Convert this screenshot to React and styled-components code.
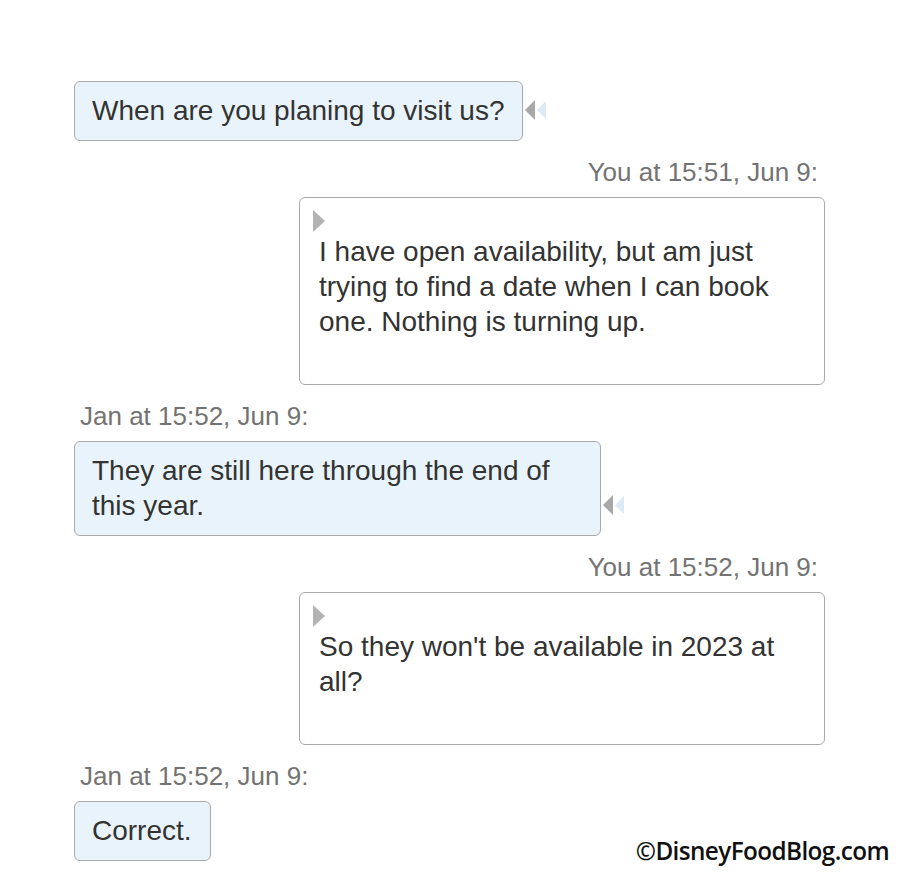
import React from 'react';
import styled, { createGlobalStyle } from 'styled-components';

const GlobalStyle = createGlobalStyle`
    html, body {
        margin: 0;
        padding: 0;
        background: #ffffff;
    }
    body {
        font-family: "Liberation Sans", Arial, sans-serif;
    }
`

const Page = styled.div`
    position: relative;
    width: 900px;
    height: 878px;
    box-sizing: border-box;
    padding: 81px 75px 0 74px;
    overflow: hidden;
`

const Thread = styled.div`
    display: flex;
    flex-direction: column;
    width: 751px;
`

const Stamp = styled.div`
    margin-top: 16px;
    margin-bottom: 10px;
    height: 30px;
    line-height: 30px;
    font-size: 26px;
    color: #737373;
    text-align: ${props => (props.$mine ? 'right' : 'left')};
    padding: ${props => (props.$mine ? '0 7px 0 0' : '0 0 0 6px')};
`

const Row = styled.div`
    display: flex;
    justify-content: ${props => (props.$mine ? 'flex-end' : 'flex-start')};
    align-items: flex-end;
`

const Bubble = styled.div`
    box-sizing: border-box;
    border: 1.5px solid #a9a9a9;
    border-radius: 6px;
    font-size: 28px;
    line-height: 35px;
    color: #333333;
    background: ${props => (props.$mine ? '#ffffff' : '#e9f3fb')};
    width: ${props => (props.$width ? props.$width + 'px' : 'auto')};
    padding: ${props => (props.$mine ? '12px 18px 45.5px 19px' : '11px 18px 11.5px 17px')};
`

const Marker = styled.svg`
    display: block;
    width: 12px;
    height: 22px;
    margin: 0 0 2px -6px;
`

const Tail = styled.svg`
    display: block;
    width: 24px;
    height: 24px;
    margin: 0 0 19px 1px;
    flex-shrink: 0;
`

const Watermark = styled.div`
    position: absolute;
    right: 11px;
    bottom: 11px;
    font-family: "Open Sans", "Noto Sans", sans-serif;
    font-weight: 600;
    font-size: 24.3px;
    letter-spacing: -0.6px;
    color: #111111;
`

const TailIcon = () => (
    <Tail viewBox="0 0 24 24">
        <polygon points="1,12 11,2 11,22" fill="#a8a8a8" />
        <polygon points="13,12 22,3 22,21" fill="#dceaf6" />
    </Tail>
)

const SentMarker = () => (
    <Marker viewBox="0 0 12 22">
        <polygon points="0,0 12,11 0,22" fill="#b3b3b3" />
    </Marker>
)

const messages = [
    { mine: false, text: 'When are you planing to visit us?' },
    { mine: true, stamp: 'You at 15:51, Jun 9:', text: 'I have open availability, but am just trying to find a date when I can book one. Nothing is turning up.' },
    { mine: false, stamp: 'Jan at 15:52, Jun 9:', text: 'They are still here through the end of this year.', width: 527 },
    { mine: true, stamp: 'You at 15:52, Jun 9:', text: "So they won't be available in 2023 at all?" },
    { mine: false, stamp: 'Jan at 15:52, Jun 9:', text: 'Correct.', notail: true },
]

const App = () => {
    return (
        <>
            <GlobalStyle />
            <Page>
                <Thread>
                    {messages.map((m, i) => (
                        <React.Fragment key={i}>
                            {m.stamp && <Stamp $mine={m.mine}>{m.stamp}</Stamp>}
                            <Row $mine={m.mine}>
                                <Bubble $mine={m.mine} $width={m.mine ? 526 : m.width}>
                                    {m.mine && <SentMarker />}
                                    {m.text}
                                </Bubble>
                                {!m.mine && !m.notail && <TailIcon />}
                            </Row>
                        </React.Fragment>
                    ))}
                </Thread>
                <Watermark>©DisneyFoodBlog.com</Watermark>
            </Page>
        </>
    );
};

export default App;
